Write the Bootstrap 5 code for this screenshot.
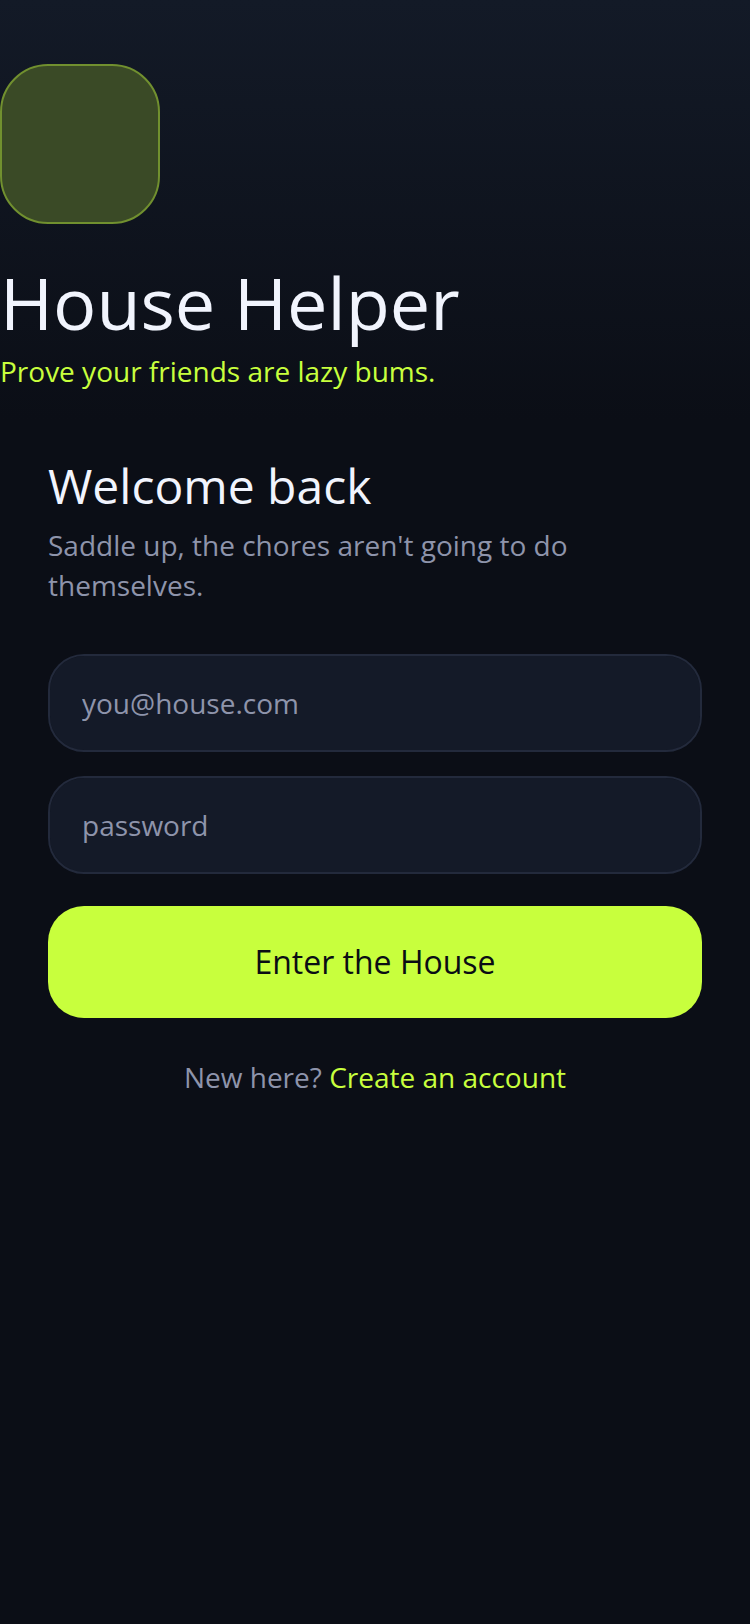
<!DOCTYPE html>
<html lang="en">
<head>
    <meta charset="UTF-8">
    <meta name="viewport" content="width=device-width, initial-scale=1.0">
    <title>House Helper</title>
    <link href="https://cdn.jsdelivr.net/npm/bootstrap@5.3.0/dist/css/bootstrap.min.css" rel="stylesheet">
    <style>
        body {
            min-height: 1624px;
            background: #0b0e16 linear-gradient(180deg, #131a27 0, #0b0e16 420px) no-repeat;
            font-family: "Open Sans", sans-serif;
        }

        /* Header */
        .hero-area {
            height: 416px;
            padding-top: 64px;
        }

        .logo-box {
            width: 160px;
            height: 160px;
            margin-bottom: 32px;
            background-color: #3a4a26;
            border: 2px solid #71902f;
            border-radius: 48px;
        }

        .app-title {
            margin: 0;
            font-size: 72px;
            font-weight: 400;
            line-height: 92px;
            color: #f1f4fd;
        }

        .app-tagline {
            margin: 3px 0 0;
            font-size: 28px;
            line-height: 40px;
            color: #c8ff3d;
        }

        /* Login form */
        .login-area {
            padding: 40px 48px;
        }

        .login-title {
            margin-bottom: 9px;
            font-size: 48px;
            font-weight: 400;
            line-height: 60px;
            color: #f1f4fd;
        }

        .login-sub {
            margin-bottom: 49px;
            font-size: 28px;
            line-height: 40px;
            color: #8e94ab;
        }

        .house-input {
            height: 98px;
            padding: 0 32px;
            font-size: 28px;
            color: #f1f4fd;
            background-color: #141a28;
            border: 2px solid #232a3c;
            border-radius: 36px;
        }

        .house-input::placeholder {
            color: #8e94ab;
            opacity: 1;
        }

        .enter-btn {
            height: 112px;
            margin-top: 8px;
            font-size: 32px;
            color: #0a0d14;
            background-color: #c8ff3d;
            border: 0;
            border-radius: 36px;
        }

        .signup-line {
            margin-top: 39px;
            font-size: 28px;
            line-height: 40px;
            color: #8e94ab;
        }

        .signup-line a {
            color: #c8ff3d;
            text-decoration: none;
        }
    </style>
</head>
<body>

<!-- Header -->
<header class="hero-area">
    <div class="logo-box"></div>
    <h1 class="app-title">House Helper</h1>
    <p class="app-tagline">Prove your friends are lazy bums.</p>
</header>

<!-- Login -->
<main class="login-area">
    <h2 class="login-title">Welcome back</h2>
    <p class="login-sub">Saddle up, the chores aren't going to do themselves.</p>
    <form class="d-flex flex-column gap-4">
        <input type="email" class="form-control house-input" placeholder="you@house.com">
        <input type="password" class="form-control house-input" placeholder="password">
        <button type="button" class="btn w-100 enter-btn">Enter the House</button>
    </form>
    <p class="signup-line text-center">New here? <a href="#">Create an account</a></p>
</main>

<script src="https://cdn.jsdelivr.net/npm/bootstrap@5.3.0/dist/js/bootstrap.bundle.min.js"></script>
</body>
</html>
